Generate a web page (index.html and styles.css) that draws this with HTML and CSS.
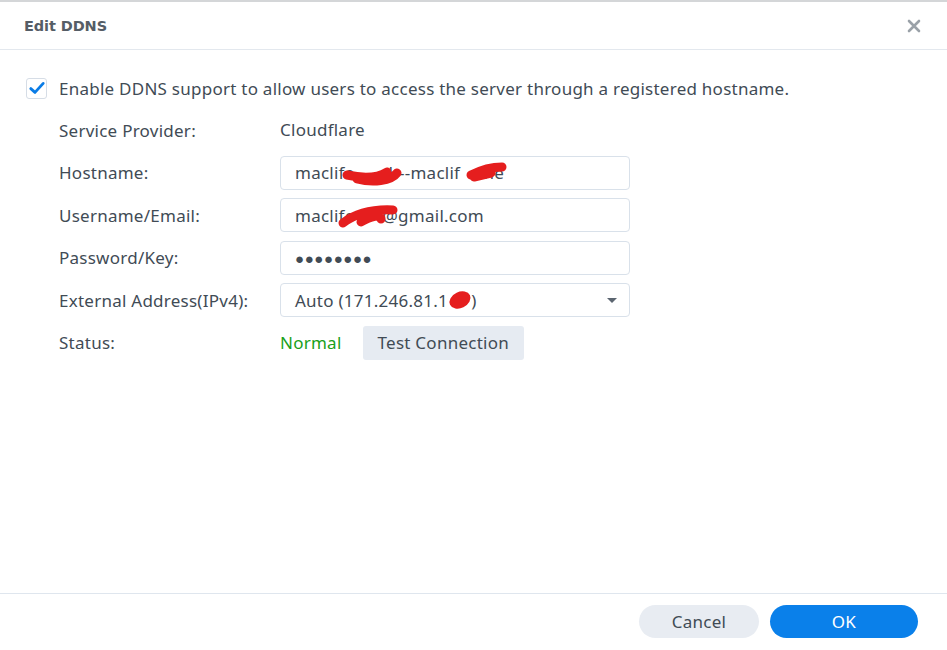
FILE: index.html
```html
<!DOCTYPE html>
<html lang="en">
<head>
  <meta charset="UTF-8" />
  <title>Edit DDNS</title>
  <link rel="stylesheet" href="styles.css">
</head>
<body>
  <div class="dialog">

    <!-- Header -->
    <div class="dialog-header">
      <h1>Edit DDNS</h1>
      <span class="close-btn">
        <svg width="14" height="14" viewBox="0 0 14 14"><path d="M2 2 L12 12 M12 2 L2 12" stroke="#9aa1a8" stroke-width="2.6" stroke-linecap="round"/></svg>
      </span>
    </div>

    <!-- Body -->
    <div class="dialog-body">
      <label class="check-row">
        <span class="checkbox">
          <svg width="18" height="18" viewBox="0 0 18 18"><path d="M2.8 9.6 L7 13.4 L15.2 4.4" fill="none" stroke="#0a7ce6" stroke-width="2.8" stroke-linecap="round" stroke-linejoin="round"/></svg>
        </span>
        Enable DDNS support to allow users to access the server through a registered hostname.
      </label>

      <div class="form-grid">
        <div class="label">Service Provider:</div>
        <div class="value">Cloudflare</div>

        <div class="label">Hostname:</div>
        <div class="field">
          <span class="field-text">maclife&nbsp;&nbsp;&nbsp;&nbsp;&nbsp;&nbsp;d---maclif&nbsp;&nbsp;&nbsp;&nbsp;&nbsp;ne</span>
          <svg class="redact" viewBox="0 0 350 34"><path d="M66 18 C80 21, 95 22, 106 15 M76 22 C92 26, 110 24, 116 16" stroke="#e51e1e" stroke-width="9" fill="none" stroke-linecap="round"/><path d="M190 18 C200 13, 212 10, 221 10 M193 20 L210 16" stroke="#e51e1e" stroke-width="9" fill="none" stroke-linecap="round"/></svg>
        </div>

        <div class="label">Username/Email:</div>
        <div class="field">
          <span class="field-text">maclife&nbsp;&nbsp;&nbsp;&nbsp;&nbsp;&nbsp;@gmail.com</span>
          <svg class="redact" viewBox="0 0 350 34"><path d="M62 24 C74 15, 92 10, 112 11 M80 23 C90 17, 100 15, 100 20" stroke="#e51e1e" stroke-width="9" fill="none" stroke-linecap="round"/></svg>
        </div>

        <div class="label">Password/Key:</div>
        <div class="field">
          <span class="field-text dots">&#9679;&#9679;&#9679;&#9679;&#9679;&#9679;&#9679;&#9679;</span>
        </div>

        <div class="label">External Address(IPv4):</div>
        <div class="field select">
          <span class="field-text">Auto (171.246.81.1&nbsp;&nbsp;&nbsp;&nbsp;&nbsp;)</span>
          <span class="caret"></span>
          <svg class="redact" viewBox="0 0 350 34"><ellipse cx="179" cy="16" rx="11" ry="8" fill="#e51e1e" transform="rotate(-25 179 16)"/></svg>
        </div>

        <div class="label">Status:</div>
        <div class="status-cell">
          <span class="status-ok">Normal</span>
          <button class="btn-test">Test Connection</button>
        </div>
      </div>
    </div>

    <!-- Footer -->
    <div class="dialog-footer">
      <button class="btn btn-cancel">Cancel</button>
      <button class="btn btn-ok">OK</button>
    </div>
  </div>
</body>
</html>
```

FILE: styles.css
```css
body {
  font-family: 'Noto Sans', 'Open Sans', sans-serif;
  font-size: 17px;
  letter-spacing: 0.25px;
  color: #414b55;
  background-color: #fff;
  margin: 0;
  padding: 0;
}

.dialog {
  display: flex;
  flex-direction: column;
  height: 100vh;
  box-sizing: border-box;
  border-top: 2px solid #d4d6d8;
}

/* Header */
.dialog-header {
  display: flex;
  align-items: center;
  justify-content: space-between;
  height: 47px;
  padding: 0 24px;
  border-bottom: 1px solid #e3e8ee;
}
.dialog-header h1 {
  margin: 0;
  font-family: 'DejaVu Sans', sans-serif;
  font-size: 14.5px;
  font-weight: bold;
  color: #555d66;
  letter-spacing: -0.1px;
}
.close-btn {
  display: flex;
  margin-right: 2px;
}

/* Body */
.dialog-body {
  flex: 1;
  padding: 27px 26px 0;
}
.check-row {
  display: flex;
  align-items: center;
  gap: 12px;
  height: 22px;
}
.checkbox {
  display: flex;
  align-items: center;
  justify-content: center;
  width: 19px;
  height: 19px;
  border: 1px solid #d6dde6;
  border-radius: 3px;
}

.form-grid {
  display: grid;
  grid-template-columns: 221px 350px;
  grid-auto-rows: 34px;
  row-gap: 8.5px;
  margin: 14px 0 0 33px;
  align-items: center;
}
.value {
  line-height: 34px;
}
.field {
  position: relative;
  height: 34px;
  box-sizing: border-box;
  border: 1px solid #d9e1ea;
  border-radius: 4px;
  display: flex;
  align-items: center;
  padding: 0 14px;
}
.field-text {
  white-space: pre;
}
.dots {
  font-size: 15px;
  letter-spacing: 0.6px;
}
.caret {
  position: absolute;
  right: 12px;
  top: 14px;
  border-left: 5px solid transparent;
  border-right: 5px solid transparent;
  border-top: 5px solid #5b6570;
}
.redact {
  position: absolute;
  left: 0;
  top: 0;
  width: 350px;
  height: 34px;
}

.status-cell {
  display: flex;
  align-items: center;
  gap: 21px;
}
.status-ok {
  color: #19a019;
}
.btn-test {
  height: 34px;
  padding: 0 15px;
  border: none;
  border-radius: 3px;
  background-color: #e6ebf2;
  color: #414b55;
  font-family: inherit;
  font-size: 17px;
  letter-spacing: 0.25px;
}

/* Footer */
.dialog-footer {
  display: flex;
  justify-content: flex-end;
  gap: 11px;
  padding: 11px 29px 12px;
  border-top: 1px solid #dfe6ee;
}
.btn {
  height: 33px;
  border: none;
  border-radius: 17px;
  font-family: inherit;
  font-size: 17px;
  letter-spacing: 0.25px;
}
.btn-cancel {
  width: 120px;
  background-color: #e8ecf2;
  color: #414b55;
}
.btn-ok {
  width: 148px;
  background-color: #0a80ea;
  color: #fff;
}
```
